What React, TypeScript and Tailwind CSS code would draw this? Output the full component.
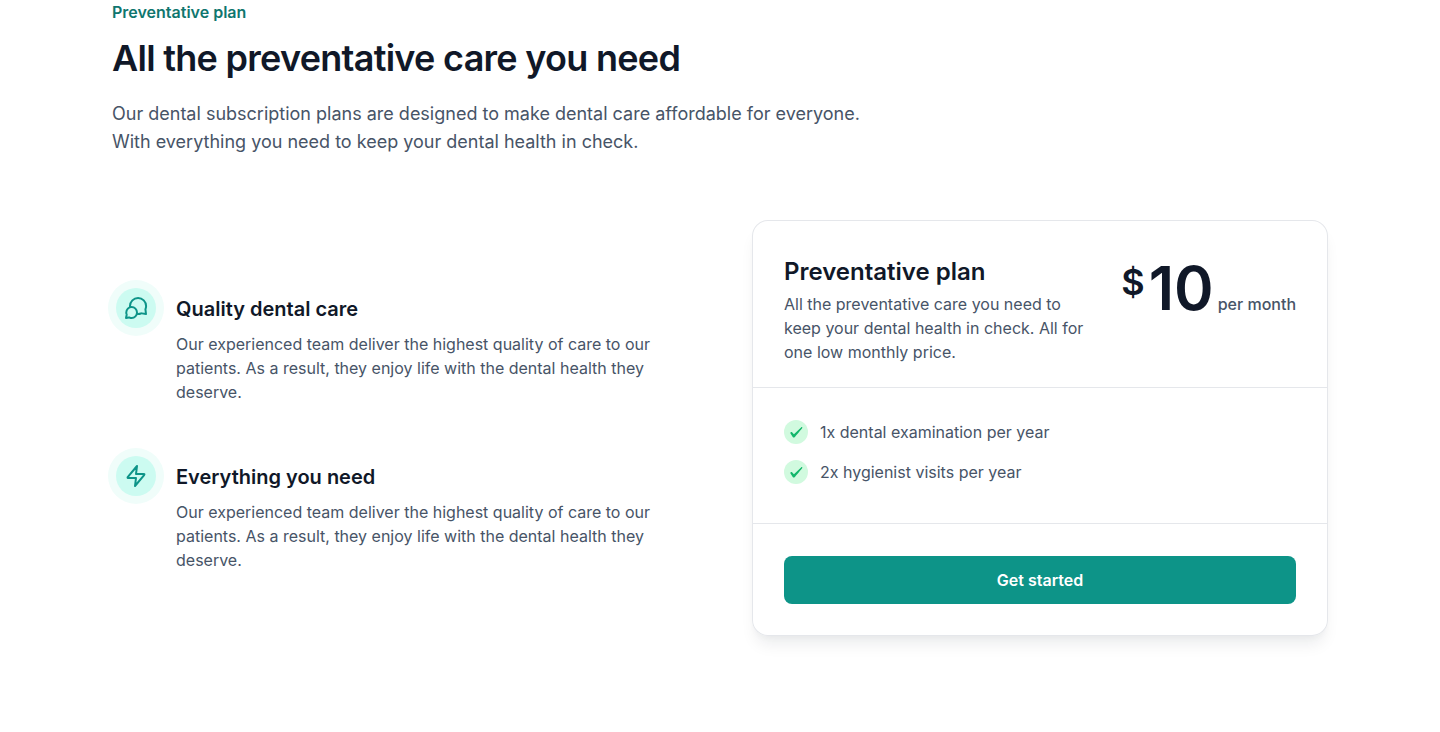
const features = [
  { title: 'Quality dental care', icon: 'chat' },
  { title: 'Everything you need', icon: 'zap' },
];

const included = ['1x dental examination per year', '2x hygienist visits per year'];

function FeatureIcon({ name }: { name: string }) {
  return (
    <svg className="size-6 text-[#0d9488]" viewBox="0 0 24 24" fill="none" stroke="currentColor" strokeWidth="2" strokeLinecap="round" strokeLinejoin="round" aria-hidden="true">
      {name === 'chat' ? (
        <path d="M6.09436 11.2288C6.03221 10.8282 5.99996 10.4179 5.99996 10C5.99996 5.58172 9.60525 2 14.0526 2C18.4999 2 22.1052 5.58172 22.1052 10C22.1052 10.9981 21.9213 11.9535 21.5852 12.8345C21.5154 13.0175 21.4804 13.109 21.4646 13.1804C21.4489 13.2512 21.4428 13.301 21.4411 13.3735L22 18L17.7765 17.3809C17.6101 17.3565 17.527 17.3443 17.4512 17.3448C17.3763 17.3452 17.3245 17.3507 17.2511 17.3661C17.177 17.3817 17.0823 17.4172 16.893 17.4881C16.0097 17.819 15.0524 18 14.0526 18C13.6344 18 13.2237 17.9683 12.8227 17.9073M7.63158 22C10.5965 22 13 19.5376 13 16.5C13 13.4624 10.5965 11 7.63158 11C4.66668 11 2.26316 13.4624 2.26316 16.5C2.26316 17.1106 2.36028 17.6979 2.53955 18.2467C2.61533 18.4787 2.65322 18.5947 2.66566 18.6739C2.67864 18.7567 2.68091 18.8031 2.67608 18.8867L2 22L4.9948 21.591C5.15827 21.5687 5.24 21.5575 5.31137 21.558C5.38652 21.5585 5.42641 21.5626 5.50011 21.5773C5.5701 21.5912 5.67416 21.6279 5.88227 21.7014C6.43059 21.8949 7.01911 22 7.63158 22Z" />
      ) : (
        <path d="M13 2L4.09344 12.6879C3.74463 13.1064 3.57023 13.3157 3.56756 13.4925C3.56524 13.6461 3.63372 13.7923 3.75324 13.8889C3.89073 14 4.16316 14 4.70802 14H12L11 22L19.9065 11.3121C20.2553 10.8936 20.4297 10.6843 20.4324 10.5075C20.4347 10.3539 20.3663 10.2077 20.2467 10.1111C20.1092 10 19.8368 10 19.292 10H12L13 2Z" />
      )}
    </svg>
  );
}

export default function App() {
  return (
    <main className="bg-white font-[Inter,sans-serif] text-base text-[#475467]">
      <div className="mx-auto max-w-7xl px-8 pb-24">
        <header className="max-w-3xl">
          <p className="font-semibold text-[#0f766e]">Preventative plan</p>
          <h1 className="mt-3 text-4xl leading-[44px] font-semibold tracking-[-0.02em] text-[#101828]">All the preventative care you need</h1>
          <p className="mt-5 text-lg leading-7">
            Our dental subscription plans are designed to make dental care affordable for everyone. With everything you need to keep your dental health in check.
          </p>
        </header>

        <div className="mt-16 grid items-center gap-16 lg:grid-cols-2">
          <ul className="flex flex-col gap-12">
            {features.map(({ title, icon }) => (
              <li key={title} className="flex gap-4">
                <span className="flex size-12 shrink-0 items-center justify-center">
                  <span className="flex size-10 items-center justify-center rounded-full bg-[#ccfbf1] ring-8 ring-[#f0fdfa]">
                    <FeatureIcon name={icon} />
                  </span>
                </span>
                <div className="pt-2.5">
                  <h2 className="text-xl leading-[30px] font-semibold text-[#101828]">{title}</h2>
                  <p className="mt-2">
                    Our experienced team deliver the highest quality of care to our patients. As a result, they enjoy life with the dental health they deserve.
                  </p>
                </div>
              </li>
            ))}
          </ul>

          <section className="rounded-2xl bg-white shadow-[0_12px_16px_-4px_rgba(16,24,40,0.08),0_4px_6px_-2px_rgba(16,24,40,0.03)] inset-ring inset-ring-gray-200">
            <div className="flex justify-between gap-8 border-b border-gray-200 px-8 pt-8 pb-[23px]">
              <div className="pt-1">
                <h2 className="text-2xl leading-8 font-semibold text-[#101828]">Preventative plan</h2>
                <p className="mt-1">All the preventative care you need to keep your dental health in check. All for one low monthly price.</p>
              </div>
              <div className="flex shrink-0 items-start gap-1">
                <span className="mt-2 text-4xl leading-[44px] font-semibold text-[#101828]">$</span>
                <span className="text-6xl leading-[72px] font-semibold text-[#101828]">10</span>
                <span className="mt-10 font-medium">per month</span>
              </div>
            </div>
            <ul className="flex flex-col gap-4 border-b border-gray-200 px-8 pt-8 pb-[39px]">
              {included.map((item) => (
                <li key={item} className="flex gap-3">
                  <span className="flex size-6 items-center justify-center rounded-full bg-[#d1fadf]">
                    <svg className="size-6 text-[#12b76a]" viewBox="0 0 24 24" fill="currentColor" aria-hidden="true">
                      <path fillRule="evenodd" clipRule="evenodd" d="M17.096 7.39004L9.93602 14.3L8.03602 12.27C7.68602 11.94 7.13602 11.92 6.73602 12.2C6.34602 12.49 6.23602 13 6.47602 13.41L8.72602 17.07C8.94602 17.41 9.32601 17.62 9.75601 17.62C10.166 17.62 10.556 17.41 10.776 17.07C11.136 16.6 18.006 8.41004 18.006 8.41004C18.906 7.49004 17.816 6.68004 17.096 7.38004V7.39004Z" />
                    </svg>
                  </span>
                  {item}
                </li>
              ))}
            </ul>
            <div className="p-8">
              <button type="button" className="h-12 w-full rounded-lg bg-[#0d9488] font-semibold text-white">Get started</button>
            </div>
          </section>
        </div>
      </div>
    </main>
  );
}
